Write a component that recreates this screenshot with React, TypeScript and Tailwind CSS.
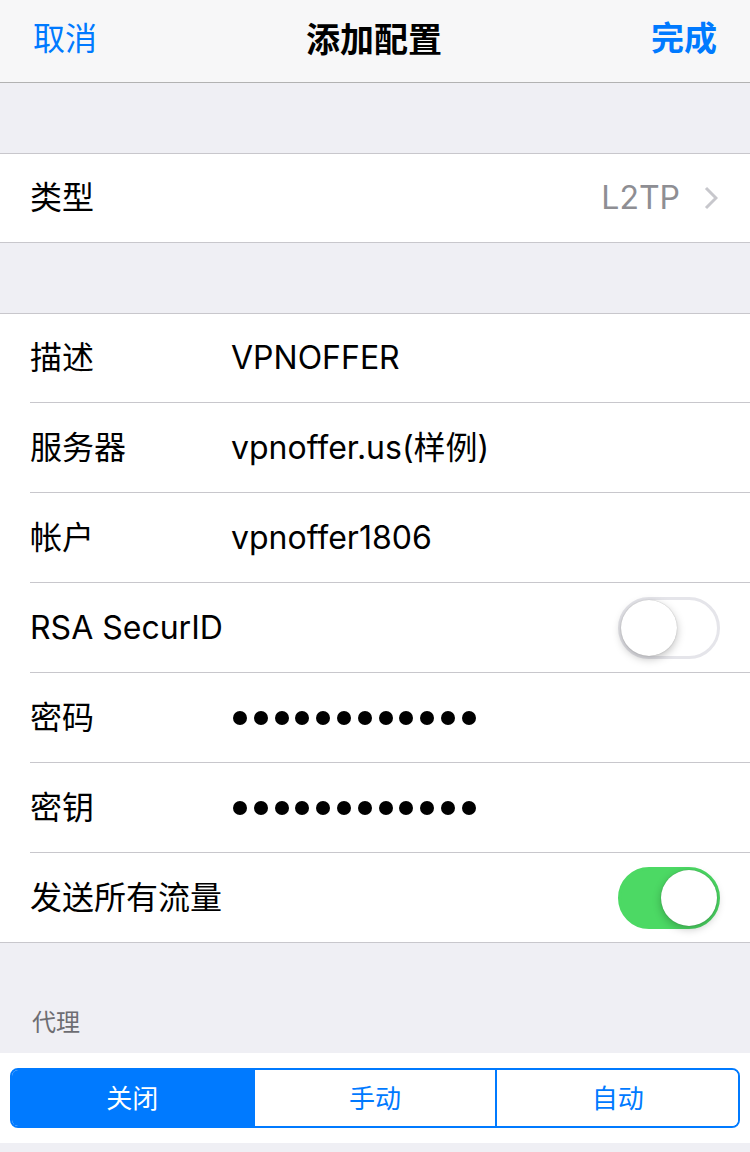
import React, { useState } from 'react';

const font = { fontFamily: 'Inter, "Noto Sans CJK SC", sans-serif' };

const Toggle: React.FC<{ on: boolean; onChange: () => void }> = ({ on, onChange }) => (
    <button
        onClick={onChange}
        className={`relative w-[102px] h-[62px] rounded-full border-[3px] transition-colors ${on ? 'bg-[#4cd964] border-[#4cd964]' : 'bg-white border-[#e5e5ea]'}`}
    >
        <span
            className={`absolute top-0 w-[56px] h-[56px] rounded-full bg-white shadow-[0_3px_8px_rgba(0,0,0,0.25),0_0_1px_rgba(0,0,0,0.3)] ${on ? 'right-0' : 'left-0'}`}
        />
    </button>
);

const Dots: React.FC = () => (
    <div className="flex gap-[6.8px] ml-[2px]">
        {Array.from({ length: 12 }, (_, i) => <span key={i} className="w-[14px] h-[14px] rounded-full bg-black" />)}
    </div>
);

const Row: React.FC<{ label: string; first?: boolean; last?: boolean; children?: React.ReactNode }> = ({ label, first, last, children }) => (
    <div className="pl-[30px] bg-white">
        <div className={`${first || last ? 'h-[89px]' : 'h-[90px]'} flex items-center pr-[30px] ${last ? '' : 'border-b border-[#c8c7cc]'}`}>
            <span className="w-[201px] shrink-0 text-[32px] text-black">{label}</span>
            {children}
        </div>
    </div>
);

const App: React.FC = () => {
    const [rsa, setRsa] = useState(false);
    const [sendAll, setSendAll] = useState(true);
    const [proxy, setProxy] = useState(0);
    const proxies = ['关闭', '手动', '自动'];

    return (
        <div className="w-[750px] h-[1152px] bg-[#efeff4] overflow-hidden" style={font}>
            {/* Nav */}
            <div className="h-[83px] bg-[#f7f7f8] border-b border-[#b2b2b2] flex items-center justify-between px-[33px] pb-[4px]">
                <span className="text-[32px] text-[#007aff]">取消</span>
                <span className="text-[34px] font-bold text-black">添加配置</span>
                <span className="text-[33px] font-semibold text-[#007aff]">完成</span>
            </div>

            <div className="h-[70px]" />

            {/* Type */}
            <div className="bg-white border-y border-[#c8c7cc] h-[90px] flex items-center pl-[30px] pr-[32px]">
                <span className="text-[32px] text-black flex-1">类型</span>
                <span className="text-[32px] text-[#8e8e93] mr-[24px]">L2TP</span>
                <svg width="14" height="24" viewBox="0 0 14 24" fill="none">
                    <polyline points="2,2 12,12 2,22" stroke="#c7c7cc" strokeWidth="3" />
                </svg>
            </div>

            <div className="h-[70px]" />

            {/* Config */}
            <div className="border-y border-[#c8c7cc]">
                <Row label="描述" first><span className="text-[32px] text-black">VPNOFFER</span></Row>
                <Row label="服务器"><span className="text-[32px] text-black">vpnoffer.us(样例)</span></Row>
                <Row label="帐户"><span className="text-[32px] text-black">vpnoffer1806</span></Row>
                <Row label="RSA SecurID">
                    <div className="flex-1 flex justify-end"><Toggle on={rsa} onChange={() => setRsa(!rsa)} /></div>
                </Row>
                <Row label="密码"><Dots /></Row>
                <Row label="密钥"><Dots /></Row>
                <Row label="发送所有流量" last>
                    <div className="flex-1 flex justify-end"><Toggle on={sendAll} onChange={() => setSendAll(!sendAll)} /></div>
                </Row>
            </div>

            {/* Proxy */}
            <div className="h-[110px] flex items-end pl-[32px] pb-[12px]">
                <span className="text-[24px] text-[#6d6d72]">代理</span>
            </div>
            <div className="bg-white h-[90px] px-[10px] flex items-center">
                <div className="w-full h-[60px] flex rounded-[8px] border-2 border-[#007aff] overflow-hidden">
                    {proxies.map((p, i) => (
                        <button
                            key={p}
                            onClick={() => setProxy(i)}
                            className={`flex-1 text-[26px] ${i > 0 ? 'border-l-2 border-[#007aff]' : ''} ${proxy === i ? 'bg-[#007aff] text-white' : 'bg-white text-[#007aff]'}`}
                        >
                            {p}
                        </button>
                    ))}
                </div>
            </div>
        </div>
    );
};

export default App;
